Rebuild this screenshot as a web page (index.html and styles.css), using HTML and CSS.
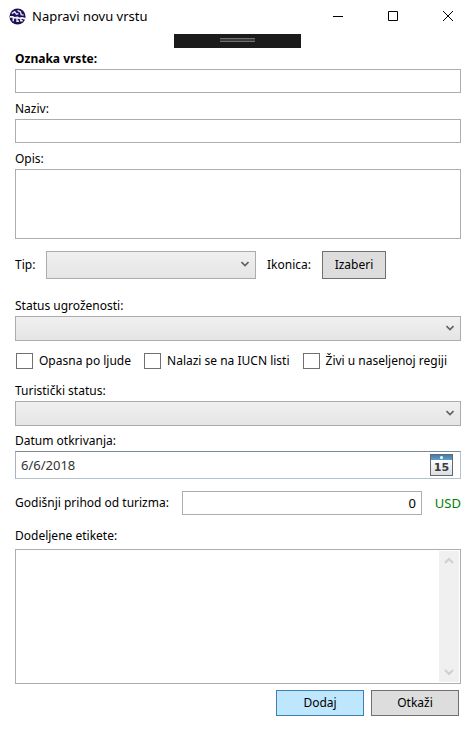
FILE: index.html
```html
<!DOCTYPE html>
<html lang="sr-Latn">
<head>
<meta charset="utf-8">
<title>Napravi novu vrstu</title>
<link rel="stylesheet" href="styles.css">
</head>
<body>
<header class="titlebar">
  <svg class="logo" viewBox="0 0 18 18" aria-hidden="true">
    <circle cx="9" cy="9" r="8.500" fill="#1c1159"/>
    <path d="M3 6l3-2 2 2.500 2-.5M9 2.500l3 1.500 1 3 2.500.5" fill="none" stroke="#e4e2ee" stroke-width="1.500"/>
    <path d="M1 9.500h3l2 1 3-.5 2 1 3-.5 3 1" fill="none" stroke="#f4f3f8" stroke-width="1.800"/>
    <path d="M4.500 10v4M8.500 10.500V14h2M12.500 11v2.500h2" fill="none" stroke="#f4f3f8" stroke-width="1.500"/>
  </svg>
  <h1 class="title">Napravi novu vrstu</h1>
  <button class="win-btn" type="button" aria-label="Minimize"><svg viewBox="0 0 10 10"><path d="M0 5.500h10"/></svg></button>
  <button class="win-btn" type="button" aria-label="Maximize"><svg viewBox="0 0 10 10"><path d="M.5.5h9v9h-9z"/></svg></button>
  <button class="win-btn" type="button" aria-label="Close"><svg viewBox="0 0 10 10"><path d="M0 0l10 10M10 0L0 10"/></svg></button>
</header>
<div class="debug-bar"><span class="grip"></span></div>

<form class="form">
  <div class="field">
    <label class="required" for="oznaka">Oznaka vrste:</label>
    <input class="box" id="oznaka" type="text">
  </div>
  <div class="field">
    <label for="naziv">Naziv:</label>
    <input class="box" id="naziv" type="text">
  </div>
  <div class="field">
    <label for="opis">Opis:</label>
    <textarea class="box area" id="opis"></textarea>
  </div>

  <div class="row type-row">
    <label for="tip">Tip:</label>
    <div class="combo combo-tall">
      <select id="tip"><option></option></select>
      <svg viewBox="0 0 8 6"><path d="M.5 1 4 4.500 7.500 1"/></svg>
    </div>
    <label for="ikonica">Ikonica:</label>
    <button class="btn pick" id="ikonica" type="button">Izaberi</button>
  </div>

  <div class="field status-field">
    <label for="status">Status ugroženosti:</label>
    <div class="combo">
      <select id="status"><option></option></select>
      <svg viewBox="0 0 8 6"><path d="M.5 1 4 4.500 7.500 1"/></svg>
    </div>
  </div>

  <div class="row checks">
    <label class="check"><input type="checkbox">Opasna po ljude</label>
    <label class="check"><input type="checkbox">Nalazi se na IUCN listi</label>
    <label class="check"><input type="checkbox">Živi u naseljenoj regiji</label>
  </div>

  <div class="field spaced">
    <label for="turizam">Turistički status:</label>
    <div class="combo">
      <select id="turizam"><option></option></select>
      <svg viewBox="0 0 8 6"><path d="M.5 1 4 4.500 7.500 1"/></svg>
    </div>
  </div>

  <div class="field">
    <label for="datum">Datum otkrivanja:</label>
    <div class="date">
      <input id="datum" type="text" value="6/6/2018">
      <button class="calendar" type="button" aria-label="Kalendar"><span class="dot"></span><span class="day">15</span></button>
    </div>
  </div>

  <div class="row income">
    <label for="prihod">Godišnji prihod od turizma:</label>
    <input class="box amount" id="prihod" type="text" value="0">
    <span class="currency">USD</span>
  </div>

  <div class="field tags-field">
    <label id="etikete">Dodeljene etikete:</label>
    <div class="list" role="listbox" aria-labelledby="etikete">
      <div class="scroll">
        <button type="button" aria-label="Gore"><svg viewBox="0 0 10 8"><path d="M1 6l4-4 4 4"/></svg></button>
        <button type="button" aria-label="Dole"><svg viewBox="0 0 10 8"><path d="M1 2l4 4 4-4"/></svg></button>
      </div>
    </div>
  </div>

  <div class="actions">
    <button class="btn primary" type="submit">Dodaj</button>
    <button class="btn" type="button">Otkaži</button>
  </div>
</form>
</body>
</html>
```
FILE: styles.css
```css
* {
  box-sizing: border-box;
}

body {
  margin: 0;
  background: #fff;
  color: #000;
  font: 12px/20px "Noto Sans", "Open Sans", sans-serif;
}

input, textarea, select, button {
  margin: 0;
  font: inherit;
  color: inherit;
  border-radius: 0;
}

/* Window chrome */
.titlebar {
  display: flex;
  align-items: center;
  height: 32px;
  padding-left: 9px;
}

.logo {
  width: 17px;
  height: 17px;
}

.title {
  flex: 1;
  margin: 0 0 0 6px;
  font-size: 13px;
  font-weight: 400;
}

.win-btn {
  display: grid;
  place-items: center;
  width: 55px;
  height: 32px;
  padding: 0;
  border: 0;
  background: none;
}

.win-btn svg {
  width: 10px;
  height: 10px;
  fill: none;
  stroke: #000;
}

.debug-bar {
  display: grid;
  justify-content: center;
  width: 127px;
  height: 14px;
  margin: 2px auto 0;
  padding-top: 4px;
  background: #1b1b1b;
}

.grip {
  width: 35px;
  height: 4px;
  border: solid #707070;
  border-width: 1px 0;
  background: #3a3a3a;
}

/* Form */
.form {
  display: flex;
  flex-direction: column;
  padding: 1px 14px 14px 15px;
}

.field {
  display: flex;
  flex-direction: column;
  margin-bottom: 6px;
}

.required {
  font-weight: 700;
}

.box {
  width: 100%;
  height: 24px;
  padding: 0 5px;
  border: 1px solid #abadb3;
  background: #fff;
}

.area {
  display: block;
  height: 70px;
  resize: none;
}

.row {
  display: flex;
  align-items: center;
}

.type-row {
  gap: 11px;
  margin-top: 6px;
}

.combo {
  display: grid;
  align-items: center;
  height: 25px;
}

.combo select,
.combo svg {
  grid-area: 1 / 1;
}

.combo select {
  width: 100%;
  height: 100%;
  border: 1px solid #acacac;
  background: linear-gradient(#f0f0f0, #e5e5e5);
  appearance: none;
}

.combo svg {
  justify-self: end;
  width: 8px;
  height: 6px;
  margin: 0 7px 2px 0;
  fill: none;
  stroke: #606060;
  stroke-width: 1.6;
  pointer-events: none;
}

.combo-tall {
  flex: 0 0 47%;
  height: 28px;
}

.btn {
  width: 88px;
  height: 26px;
  padding: 0;
  border: 1px solid #707070;
  background: #ddd;
}

.pick {
  width: 64px;
  height: 28px;
}

.status-field {
  margin: 17px 0 12px;
}

.checks {
  gap: 13px;
  height: 16px;
  padding-left: 1px;
}

.check {
  display: flex;
  align-items: center;
  gap: 6px;
  white-space: nowrap;
}

.check input {
  width: 17px;
  height: 16px;
  border: 1px solid #707070;
  background: #fff;
  appearance: none;
}

.spaced {
  margin: 12px 0 5px;
}

.date {
  display: flex;
  align-items: center;
  height: 28px;
  padding: 0 7px 0 5px;
  border: 1px solid #b5c3ce;
  border-top-color: #7b8a97;
  border-left-color: #a5b4c1;
}

.date input {
  flex: 1;
  min-width: 0;
  padding: 0;
  border: 0;
  background: none;
  color: #333;
  font-size: 13px;
}

.calendar {
  display: grid;
  grid-template-rows: 5px 1fr;
  justify-items: center;
  width: 23px;
  height: 22px;
  padding: 0;
  border: 1px solid #66686d;
  background: linear-gradient(#417fb0, #649cc6 5px, #fff 5px, #dcdee2);
}

.dot {
  width: 3px;
  height: 3px;
  margin-top: 1px;
  border-radius: 50%;
  background: #fff;
}

.day {
  color: #3c3c40;
  font-family: "DejaVu Sans", sans-serif;
  font-size: 11px;
  font-weight: 700;
  line-height: 16px;
}

.income {
  margin-top: 6px;
}

.amount {
  flex: 1;
  min-width: 0;
  margin: 0 13px;
  font-size: 13px;
  text-align: right;
}

.currency {
  color: #008000;
  font-size: 13px;
}

.tags-field {
  gap: 3px;
  margin-top: 11px;
}

.list {
  display: flex;
  justify-content: flex-end;
  height: 135px;
  padding: 1px;
  border: 1px solid #abadb3;
}

.scroll {
  display: flex;
  flex-direction: column;
  justify-content: space-between;
  width: 20px;
  background: #f0f0f0;
}

.scroll button {
  display: grid;
  place-items: center;
  height: 20px;
  padding: 0;
  border: 0;
  background: none;
}

.scroll svg {
  width: 10px;
  height: 8px;
  fill: none;
  stroke: #cfcfcf;
  stroke-width: 2;
}

.actions {
  display: flex;
  justify-content: flex-end;
  gap: 7px;
  padding-right: 2px;
}

.primary {
  border-color: #3c7fb1;
  background: #bee6fd;
}
```
